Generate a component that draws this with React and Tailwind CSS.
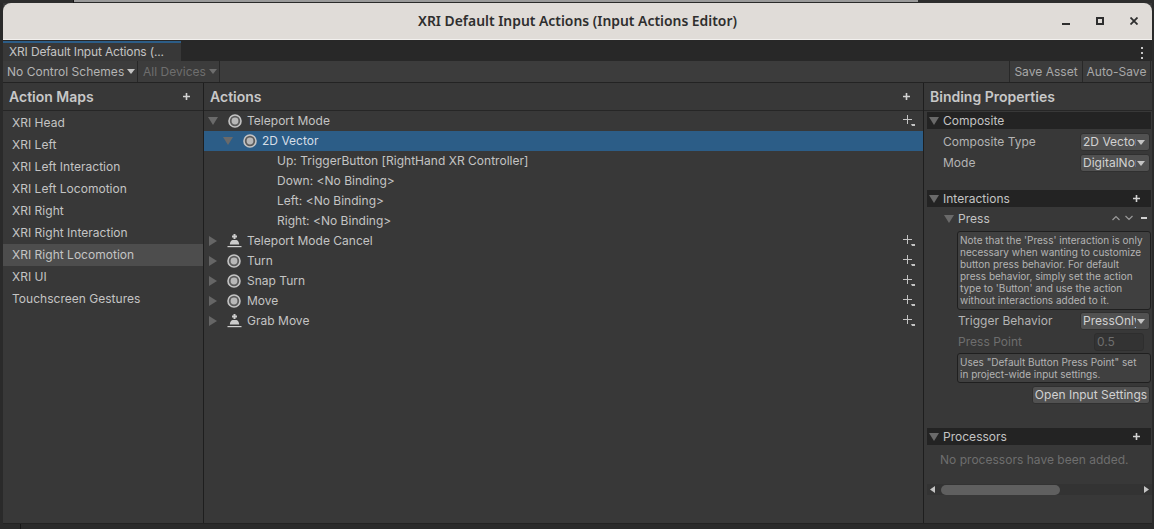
import React from 'react';

const Down = ({ className = '' }) => (
  <svg width="10" height="8" viewBox="0 0 10 8" className={`shrink-0 ${className}`}>
    <path d="M0 0H10L5 8Z" fill="#6a6a6a" />
  </svg>
);

const Right = () => (
  <svg width="8" height="10" viewBox="0 0 8 10" className="shrink-0">
    <path d="M0 0V10L8 5Z" fill="#666666" />
  </svg>
);

const Caret = ({ color = '#c4c4c4' }) => (
  <svg width="8" height="5" viewBox="0 0 8 5" className="shrink-0">
    <path d="M0 0H8L4 5Z" fill={color} />
  </svg>
);

const ValueIcon = () => (
  <svg width="14" height="14" viewBox="0 0 14 14" className="shrink-0">
    <circle cx="7" cy="7" r="6" fill="#5c5c5c" stroke="#c4c4c4" strokeWidth="1.6" />
    <circle cx="7" cy="7" r="3.4" fill="#b8b8b8" />
  </svg>
);

const ButtonIcon = () => (
  <svg width="15" height="14" viewBox="0 0 15 14" className="shrink-0">
    <path d="M6.5 0H8.5V1.5H10V3.5H8.5V5H6.5V3.5H5V1.5H6.5Z" fill="#cccccc" />
    <path d="M5.5 6H9.5C11 6.6 12 8 12.2 10.4H2.8C3 8 4 6.6 5.5 6Z" fill="#cccccc" />
    <path d="M0.5 12.6H14.5" stroke="#d0d0d0" strokeWidth="1.2" />
  </svg>
);

const PlusMenu = () => (
  <svg width="12" height="12" viewBox="0 0 12 12" className="shrink-0">
    <path d="M4.5 0V9M0 4.5H9" stroke="#c4c4c4" strokeWidth="1" />
    <path d="M8 9H12V11H9Z" fill="#c4c4c4" />
  </svg>
);

const Plus = () => (
  <svg width="7" height="7" viewBox="0 0 7 7" className="shrink-0">
    <path d="M3.5 0V7M0 3.5H7" stroke="#d2d2d2" strokeWidth="1.6" />
  </svg>
);

const mapNames = [
  'XRI Head',
  'XRI Left',
  'XRI Left Interaction',
  'XRI Left Locomotion',
  'XRI Right',
  'XRI Right Interaction',
  'XRI Right Locomotion',
  'XRI UI',
  'Touchscreen Gestures',
];

const bindings = [
  'Up: TriggerButton [RightHand XR Controller]',
  'Down: <No Binding>',
  'Left: <No Binding>',
  'Right: <No Binding>',
];

const collapsed = [
  ['Teleport Mode Cancel', 'button'],
  ['Turn', 'value'],
  ['Snap Turn', 'value'],
  ['Move', 'value'],
  ['Grab Move', 'button'],
];

const Section = ({ title, plus }) => (
  <div className="h-[17px] ml-[3px] mr-px flex items-center bg-[#232323] pl-[2px] pr-[11px] text-[#c4c4c4]">
    <Down />
    <span className="ml-[4px] flex-1">{title}</span>
    {plus && <Plus />}
  </div>
);

const Dropdown = ({ label, value, className = '' }) => (
  <div className={`flex items-center ${className}`}>
    <span className="flex-1 text-[#b4b4b4]">{label}</span>
    <div className="w-[70px] h-[18px] mr-[2px] rounded-[3px] bg-[#515151] border border-[#303030] flex items-center pl-[2px] pr-[4px] text-[#d2d2d2]">
      <span className="flex-1 overflow-hidden whitespace-nowrap mr-px">{value}</span>
      <Caret />
    </div>
  </div>
);

const App = () => {
  return (
    <div className="w-[1154px] h-[529px] overflow-hidden bg-[#2a2a2a] flex flex-col text-[12px] leading-[16px] tracking-[0.02px] text-[#c4c4c4] font-['Inter',sans-serif]">
      {/* what shows of the window behind */}
      <div className="h-[3px] flex shrink-0">
        <div className="w-[74px] bg-[#2d2d2d] border-r border-[#161616]" />
        <div className="w-[844px] h-[2px] bg-[#9a9a9a]" />
        <div className="flex-1 bg-[#2d2d2d]" />
      </div>

      <div className="ml-[3px] w-[1149px] h-[521px] flex flex-col bg-[#383838]">
        {/* title bar */}
        <div className="h-[37px] shrink-0 rounded-t-[8px] bg-[#e0dcd8] border-b border-[#f2f0ee] flex items-center relative font-['Noto_Sans',sans-serif] text-[#2e2e2e]">
          <span className="w-full text-center text-[13.9px] tracking-normal font-semibold">
            XRI Default Input Actions (Input Actions Editor)
          </span>
          <div className="absolute right-[14px] top-[14px] flex items-center gap-[26px]">
            <div className="w-[8px] h-[8px] flex items-end"><div className="w-[8px] h-[2px] bg-[#2e2e2e]" /></div>
            <div className="w-[8px] h-[8px] border-2 border-[#2e2e2e]" />
            <svg width="8" height="8" viewBox="0 0 8 8">
              <path d="M0.5 0.5L7.5 7.5M7.5 0.5L0.5 7.5" stroke="#2e2e2e" strokeWidth="1.8" />
            </svg>
          </div>
        </div>

        {/* tab strip */}
        <div className="h-[21px] shrink-0 flex bg-[#282828] items-end">
          <div className="w-[178px] h-[20px] border-t-2 border-[#2c5d87] bg-[#383838] pl-[6px] text-[#c4c4c4] flex items-center tracking-[-0.15px]">
            XRI Default Input Actions (...
          </div>
          <div className="flex-1" />
          <div className="w-[3px] h-[12px] mb-[2px] mr-[9px] flex flex-col justify-between items-center">
            <div className="w-[2px] h-[2px] bg-[#c4c4c4]" />
            <div className="w-[2px] h-[2px] bg-[#c4c4c4]" />
            <div className="w-[2px] h-[2px] bg-[#c4c4c4]" />
          </div>
        </div>

        {/* toolbar */}
        <div className="h-[22px] shrink-0 flex items-stretch bg-[#3c3c3c] border-b border-[#232323] text-[#b4b4b4] whitespace-nowrap">
          <div className="w-[135px] shrink-0 pl-[4px] border-r border-[#282828] flex items-center gap-[3px]">
            <span>No Control Schemes</span>
            <Caret />
          </div>
          <div className="w-[82px] shrink-0 pl-[5px] border-r border-[#282828] flex items-center gap-[3px] text-[#6e6e6e]">
            <span>All Devices</span>
            <Caret color="#6e6e6e" />
          </div>
          <div className="flex-1" />
          <div className="w-[73px] border-l border-[#282828] flex items-center justify-center text-[#a8a8a8]">Save Asset</div>
          <div className="w-[69px] mr-px border-x border-[#282828] flex items-center justify-center text-[#a8a8a8]">Auto-Save</div>
        </div>

        <div className="flex-1 min-h-0 flex border-b border-[#232323]">
          {/* action maps */}
          <div className="w-[201px] shrink-0 border-r border-[#1e1e1e] flex flex-col">
            <div className="h-[28px] shrink-0 border-b border-[#262626] flex items-center pl-[6px] pr-[13px] mb-px text-[14px] font-semibold tracking-normal text-[#c8c8c8]">
              <span className="flex-1">Action Maps</span>
              <Plus />
            </div>
            {mapNames.map((name) => (
              <div
                key={name}
                className={`h-[22px] flex items-center pl-[9px] ${name === 'XRI Right Locomotion' ? 'bg-[#4d4d4d]' : ''}`}
              >
                {name}
              </div>
            ))}
          </div>

          {/* actions */}
          <div className="w-[720px] shrink-0 border-r border-[#1e1e1e] flex flex-col">
            <div className="h-[28px] shrink-0 border-b border-[#262626] flex items-center pl-[6px] pr-[13px] text-[14px] font-semibold tracking-normal text-[#c8c8c8]">
              <span className="flex-1">Actions</span>
              <Plus />
            </div>
            <div className="h-[20px] flex items-center pl-[4px] pr-[8px]">
              <Down />
              <span className="ml-[10px]"><ValueIcon /></span>
              <span className="ml-[5px] flex-1">Teleport Mode</span>
              <PlusMenu />
            </div>
            <div className="h-[20px] flex items-center pl-[19px] bg-[#2c5d87]">
              <Down />
              <span className="ml-[10px]"><ValueIcon /></span>
              <span className="ml-[5px] text-[#d6dee6]">2D Vector</span>
            </div>
            {bindings.map((text) => (
              <div key={text} className="h-[20px] flex items-center pl-[73px]">{text}</div>
            ))}
            {collapsed.map(([name, kind]) => (
              <div key={name} className="h-[20px] flex items-center pl-[5px] pr-[8px]">
                <Right />
                <span className="ml-[10px] w-[15px]">{kind === 'value' ? <ValueIcon /> : <ButtonIcon />}</span>
                <span className="ml-[5px] flex-1">{name}</span>
                <PlusMenu />
              </div>
            ))}
          </div>

          {/* binding properties */}
          <div className="flex-1 min-w-0 flex flex-col">
            <div className="h-[28px] shrink-0 border-b border-[#262626] flex items-center pl-[6px] text-[14px] font-semibold tracking-normal text-[#c8c8c8]">
              Binding Properties
            </div>
            <div className="mt-px"><Section title="Composite" /></div>
            <Dropdown label="Composite Type" value="2D Vector" className="ml-[19px] h-[18px] mt-[4px]" />
            <Dropdown label="Mode" value="DigitalNormalized" className="ml-[19px] h-[18px] mt-[3px]" />
            <div className="mt-[18px]"><Section title="Interactions" plus /></div>
            <div className="h-[20px] mt-[2px] ml-[20px] pr-[4px] flex items-center">
              <Down />
              <span className="ml-[4px] flex-1">Press</span>
              <svg width="22" height="6" viewBox="0 0 22 6" className="mr-[7px] mb-[2px]">
                <path d="M0.5 5L4 1.5L7.5 5M13.5 1L17 4.5L20.5 1" fill="none" stroke="#9a9a9a" strokeWidth="1.2" />
              </svg>
              <div className="w-[6px] h-[2px] mr-px mb-[2px] bg-[#d2d2d2]" />
            </div>
            <div className="h-[79px] mt-[2px] ml-[33px] mr-px border border-[#1f1f1f] rounded-[3px] bg-[#404040] pl-[2px] pr-[6px] pt-[2px] text-[10px] leading-[12px] tracking-normal text-[#b4b4b4]">
              Note that the 'Press' interaction is only necessary when wanting to customize button press behavior. For default press behavior, simply set the action type to 'Button' and use the action without interactions added to it.
            </div>
            <Dropdown label="Trigger Behavior" value="PressOnly" className="ml-[34px] h-[18px] mt-[2px]" />
            <div className="ml-[34px] h-[18px] mt-[3px] flex items-center text-[#6e6e6e]">
              <span className="flex-1">Press Point</span>
              <div className="w-[50px] h-[18px] mr-[8px] rounded-[3px] border border-[#2e2e2e] bg-[#333333] pl-[2px] flex items-center">0.5</div>
            </div>
            <div className="h-[30px] mt-[2px] ml-[33px] mr-px border border-[#1f1f1f] rounded-[3px] bg-[#404040] pl-[2px] pr-[6px] pt-[2px] text-[10px] leading-[12px] tracking-normal text-[#b4b4b4]">
              Uses "Default Button Press Point" set in project-wide input settings.
            </div>
            <div className="mt-[3px] ml-[108px] w-[118px] h-[18px] rounded-[3px] bg-[#515151] border border-[#303030] flex items-center justify-center text-[#d2d2d2] whitespace-nowrap">
              Open Input Settings
            </div>
            <div className="mt-[24px]"><Section title="Processors" plus /></div>
            <div className="h-[30px] ml-[16px] flex items-center text-[#6e6e6e]">No processors have been added.</div>
            <div className="h-[11px] mt-[9px] flex items-center bg-[#333333] ml-[3px]">
              <svg width="5" height="7" viewBox="0 0 5 7" className="ml-[3px]"><path d="M5 0V7L0 3.5Z" fill="#c4c4c4" /></svg>
              <div className="ml-[6px] w-[119px] h-[10px] rounded-full bg-[#5f5f5f]" />
              <div className="flex-1" />
              <svg width="5" height="7" viewBox="0 0 5 7" className="mr-[3px]"><path d="M0 0V7L5 3.5Z" fill="#c4c4c4" /></svg>
            </div>
          </div>
        </div>
      </div>

      <div className="flex-1 flex">
        <div className="w-[20px]" />
        <div className="w-px bg-[#161616]" />
      </div>
    </div>
  );
};

export default App;
